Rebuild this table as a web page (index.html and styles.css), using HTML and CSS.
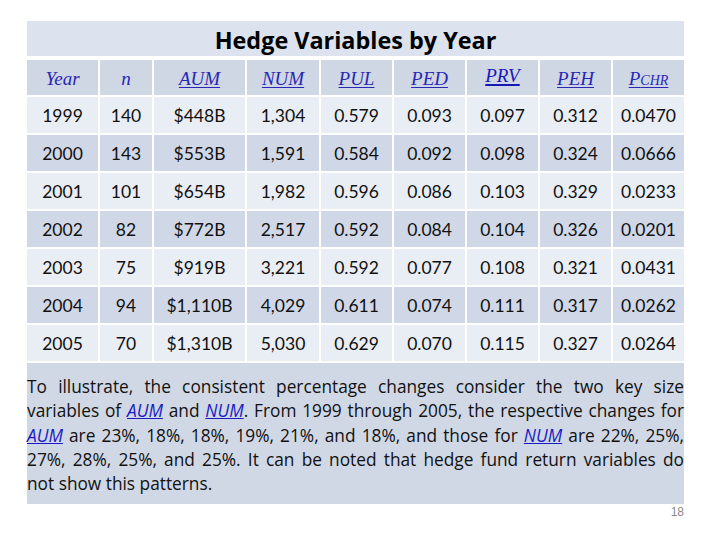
FILE: index.html
```html
<!DOCTYPE html>
<html>
<head>
<meta charset="utf-8">
<link rel="stylesheet" href="styles.css">
</head>
<body>
<div class="slide">
  <div class="title">Hedge Variables by Year</div>
  <div class="grid">
    <div class="hd">Year</div>
    <div class="hd">n</div>
    <div class="hd"><u>AUM</u></div>
    <div class="hd"><u>NUM</u></div>
    <div class="hd"><u>PUL</u></div>
    <div class="hd"><u>PED</u></div>
    <div class="hd prv"><u>PRV</u></div>
    <div class="hd"><u>PEH</u></div>
    <div class="hd"><u>P<span class="sc">CHR</span></u></div>

    <div class="c l">1999</div><div class="c l">140</div><div class="c l">$448B</div><div class="c l">1,304</div><div class="c l">0.579</div><div class="c l">0.093</div><div class="c l">0.097</div><div class="c l">0.312</div><div class="c l">0.0470</div>
    <div class="c d">2000</div><div class="c d">143</div><div class="c d">$553B</div><div class="c d">1,591</div><div class="c d">0.584</div><div class="c d">0.092</div><div class="c d">0.098</div><div class="c d">0.324</div><div class="c d">0.0666</div>
    <div class="c l">2001</div><div class="c l">101</div><div class="c l">$654B</div><div class="c l">1,982</div><div class="c l">0.596</div><div class="c l">0.086</div><div class="c l">0.103</div><div class="c l">0.329</div><div class="c l">0.0233</div>
    <div class="c d">2002</div><div class="c d">82</div><div class="c d">$772B</div><div class="c d">2,517</div><div class="c d">0.592</div><div class="c d">0.084</div><div class="c d">0.104</div><div class="c d">0.326</div><div class="c d">0.0201</div>
    <div class="c l">2003</div><div class="c l">75</div><div class="c l">$919B</div><div class="c l">3,221</div><div class="c l">0.592</div><div class="c l">0.077</div><div class="c l">0.108</div><div class="c l">0.321</div><div class="c l">0.0431</div>
    <div class="c d">2004</div><div class="c d">94</div><div class="c d">$1,110B</div><div class="c d">4,029</div><div class="c d">0.611</div><div class="c d">0.074</div><div class="c d">0.111</div><div class="c d">0.317</div><div class="c d">0.0262</div>
    <div class="c l">2005</div><div class="c l">70</div><div class="c l">$1,310B</div><div class="c l">5,030</div><div class="c l">0.629</div><div class="c l">0.070</div><div class="c l">0.115</div><div class="c l">0.327</div><div class="c l">0.0264</div>
  </div>
  <div class="para">
    <span class="ln">To illustrate, the consistent percentage changes consider the two key size</span>
    <span class="ln">variables of <a class="lk">AUM</a> and <a class="lk">NUM</a>. From 1999 through 2005, the respective changes for</span>
    <span class="ln"><a class="lk">AUM</a> are 23%, 18%, 18%, 19%, 21%, and 18%, and those for <a class="lk">NUM</a> are 22%, 25%,</span>
    <span class="ln">27%, 28%, 25%, and 25%. It can be noted that hedge fund return variables do</span>
    <span class="ln last">not show this patterns.</span>
  </div>
  <div class="pagenum">18</div>
</div>
</body>
</html>
```
FILE: styles.css
```css
html, body {
  margin: 0;
  padding: 0;
  background: #ffffff;
}
.slide {
  width: 657px;
  margin: 21px 0 0 27px;
  font-family: Lato, "Open Sans", sans-serif;
}
.title {
  height: 35px;
  background: #dce3ee;
  font-family: "Open Sans", sans-serif;
  font-weight: 700;
  font-size: 23.4px;
  color: #000;
  text-align: center;
  line-height: 39px;
}
.grid {
  display: grid;
  grid-template-columns: 71px 52px 91px 72px 71px 71px 71px 71px 71px;
  grid-template-rows: 35px repeat(7, 36px);
  gap: 2px;
  margin-top: 4px;
}
.hd {
  background: #cfd6e4;
  font-family: "Liberation Serif", serif;
  font-style: italic;
  font-size: 19px;
  color: #2828b4;
  display: flex;
  align-items: center;
  justify-content: center;
  padding-top: 2px;
}
.hd u {
  text-decoration-thickness: 1px;
  text-underline-offset: 2px;
}
.hd.prv {
  padding-top: 0;
  padding-bottom: 4px;
}
.hd.prv u {
  text-decoration-thickness: 2px;
  color: #1818b8;
}
.sc {
  font-size: 14px;
}
.c {
  display: flex;
  align-items: center;
  justify-content: center;
  font-size: 17.5px;
  color: #111;
}
.c.l { background: #e9edf4; }
.c.d { background: #d0d8e8; }
.para {
  margin-top: 2px;
  height: 141px;
  box-sizing: border-box;
  background: #d0d8e6;
  font-family: "Open Sans", sans-serif;
  font-size: 17.3px;
  line-height: 24.3px;
  color: #111;
  padding-top: 12px;
}
.ln {
  display: block;
  text-align: justify;
  text-align-last: justify;
  white-space: nowrap;
}
.ln.last {
  text-align-last: left;
}
.lk {
  color: #1a1ac4;
  font-style: italic;
  text-decoration: underline;
}
.pagenum {
  text-align: right;
  font-family: "Liberation Sans", sans-serif;
  font-size: 12px;
  color: #8a8a8a;
  margin-top: 1px;
}
```
